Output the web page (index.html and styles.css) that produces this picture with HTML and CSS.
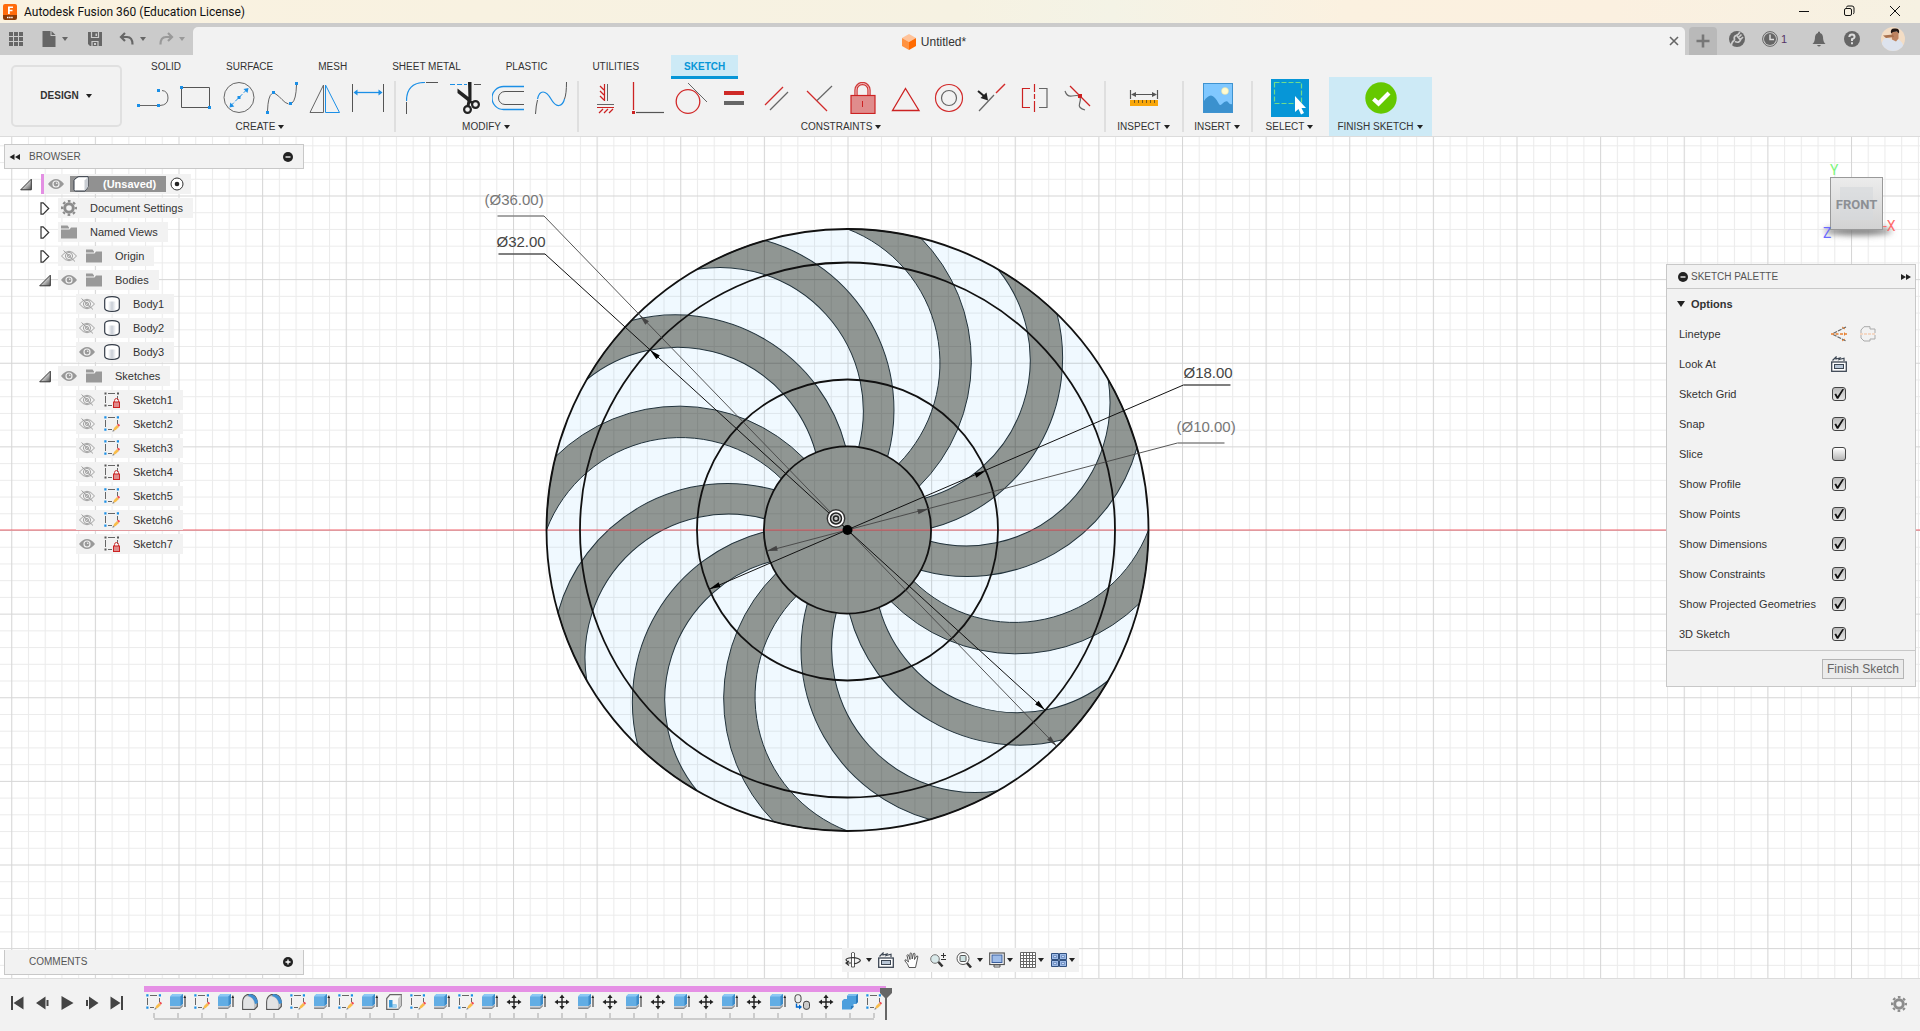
FILE: index.html
```html
<!DOCTYPE html>
<html lang="en">
<head>
<meta charset="utf-8">
<title>Autodesk Fusion 360 (Education License)</title>
<link rel="stylesheet" href="styles.css">
</head>
<body>
<svg class="defs" aria-hidden="true">
  <defs>
    <linearGradient id="gTri" x1="0" y1="0" x2="1" y2="1"><stop offset="0.3" stop-color="#fff"/><stop offset="1" stop-color="#555"/></linearGradient>
    <linearGradient id="gCyl"><stop offset="0" stop-color="#fff"/><stop offset="0.5" stop-color="#c9ced6"/><stop offset="1" stop-color="#fff"/></linearGradient>
  </defs>
  <symbol id="eye" viewBox="0 0 16 16"><path d="M0 8Q8-2 16 8Q8 18 0 8Z" fill="#999"/><circle cx="8" cy="8" r="3.6" fill="#f2f2f2"/><circle cx="8" cy="8" r="2.4" fill="#999"/><circle cx="8.7" cy="7.3" r=".8" fill="#f2f2f2"/></symbol>
  <symbol id="eyeoff" viewBox="0 0 16 16"><g fill="none" stroke="#999" stroke-width=".9"><path d="M.5 8Q8-1.500 15.500 8Q8 17.500.5 8Z"/><circle cx="8" cy="8" r="3.600"/><circle cx="8" cy="8" r="1.500"/><path d="M2.500 2.500L14 13.500"/></g></symbol>
  <symbol id="folder" viewBox="0 0 16 16"><path d="M0 1.500H6.500L8 3.500V4.500H0Z" fill="#999"/><path d="M0 5.500H8.500L10 3.500H16V14.500H0Z" fill="#999"/></symbol>
  <symbol id="gear" viewBox="0 0 16 16"><circle cx="8" cy="8" r="4.300" fill="none" stroke="#8c8c8c" stroke-width="3"/><circle cx="8" cy="8" r="6.900" fill="none" stroke="#8c8c8c" stroke-width="2.200" stroke-dasharray="2.700 2.720" stroke-dashoffset="1.350"/></symbol>
  <symbol id="body" viewBox="0 0 16 16"><path d="M.7 4Q.7.700 8 .7T15.300 4V12Q15.300 15.300 8 15.300T.7 12Z" fill="#fff" stroke="#333b47" stroke-width="1.200"/><path d="M4 5.500H12V14Q8 15 4 14Z" fill="url(#gCyl)"/></symbol>
  <symbol id="sk-frame" viewBox="0 0 16 16"><path d="M4 1.500H11M1.500 4V11M13.500 4V8M4 13.500H8" fill="none" stroke="#666"/></symbol>
  <symbol id="sk-lock" viewBox="0 0 16 16"><use href="#sk-frame"/><path d="M.5.500h2v2h-2zM13 .5h2v2h-2zM.5 12.500h2v2h-2z" fill="#555"/><path d="M10.500 10V8.500a2 2 0 0 1 4 0V10" fill="none" stroke="#cf3a3a"/><rect x="9.500" y="10" width="6" height="5.500" fill="#e08a8a" stroke="#c22"/></symbol>
  <symbol id="sk-edit" viewBox="0 0 16 16"><use href="#sk-frame"/><path d="M.3.300h2.200v2.200H.300zM12.800.300H15v2.200h-2.200zM.3 12.500h2.200v2.200H.300z" fill="#1b8fe6"/><path d="M9 15l1-3 3-3 2 2-3.300 3z" fill="#f9bd4b"/><path d="M13 8.800l1-1q1.500.2 2 1.700l-1.200 1.300z" fill="#ee4d55"/><path d="M8.300 15.700l.8-2.200 1.600 1.600z" fill="#888"/></symbol>
  <symbol id="tri-closed" viewBox="0 0 12 14"><path d="M1.700 1V13H4L10 7 4 1Z" fill="#fff" stroke="#333" stroke-width="1.300"/></symbol>
  <symbol id="tri-open" viewBox="0 0 12 12"><path d="M11.300.7V11.300H.7Z" fill="url(#gTri)" stroke="#333"/></symbol>
  <symbol id="caret" viewBox="0 0 8 8"><path d="M1 2H7L4 6Z"/></symbol>
  <symbol id="lookat" viewBox="0 0 16 16"><rect x=".7" y="6" width="14.600" height="9.300" fill="#fff" stroke="#3c4653" stroke-width="1.300"/><rect x="3.500" y="8.500" width="9" height="4" fill="#b9c6d6" stroke="#3c4653"/><path d="M1.500 4.500L5 1V3L9 2 8 3.500 13 2.200V5" fill="none" stroke="#3c4653" stroke-width="1.200"/></symbol>
  <symbol id="extrude" viewBox="0 0 16 16"><path d="M0 12.500H10L13 10V12L10 15H0Z" fill="#aab0b8"/><path d="M.3 14.500H10L12.500 12" stroke="#888" fill="none"/><path d="M0 2.500L2.500 0H13V9.500L10.500 12H0Z" fill="#62ade4"/><path d="M0 2.500L2.500 0H13L10.500 2.500Z" fill="#8cc8f5"/><path d="M10.500 2.500L13 0V9.500L10.500 12Z" fill="#3d8cc9"/><path d="M15 13V3" stroke="#222"/><path d="M13.400 4L15 1l1 3z" fill="#222"/></symbol>
  <symbol id="fillet-t" viewBox="0 0 16 16"><path d="M.7 15.300V8Q.7 2.500 5 .7H10Q15.300 2 15.300 10V12.500L12.500 15.300Z" fill="#c4c6c8" stroke="#555" stroke-width="1.200"/><path d="M1.300 14.700V8Q1.500 3 5 2.500Q11.500 3 12 9.500V14.700Z" fill="#e2e3e4"/><path d="M7 0Q11 0 13.500 3T16 9L13 10Q12 3.500 6 2Z" fill="#3f8fd2"/></symbol>
  <symbol id="shell" viewBox="0 0 16 16"><path d="M.7 4.500L4 .7H15.300V11.500L12 15.300H.7Z" fill="#f6f6f6" stroke="#666" stroke-width="1.200"/><path d="M12 4.500L15.300.7V11.500L12 15.300Z" fill="#c8c8c8"/><path d="M3 6V13.500H10.500V10.500H6.500V6Z" fill="#3d9bd9"/><path d="M6.500 10.500h4v3h-4z" fill="#9fd2f3"/></symbol>
  <symbol id="move" viewBox="0 0 16 16"><path d="M8 2V14M2 8H14" stroke="#222" stroke-width="1.400"/><path d="M8 .5l2.600 3.500H5.400zM8 15.500l2.600-3.500H5.400zM.5 8L4 5.400v5.200zM15.500 8L12 5.400v5.200z" fill="#222"/></symbol>
  <symbol id="pattern" viewBox="0 0 16 16"><rect x="1" y=".7" width="6" height="8" rx="2.500" fill="#eee" stroke="#444"/><rect x="9.500" y="7.300" width="6" height="8" rx="2.500" fill="#ccc" stroke="#444"/><path d="M2.500 9.500V13H6" fill="none" stroke="#06c" stroke-width="1.400"/><path d="M5 10.500L8 13 5 15.500z" fill="#06c"/></symbol>
  <symbol id="combine" viewBox="0 0 16 16"><path d="M0 7L2 5H5V2L7 0H16V8L14 10H11.500V13L9 15.500H0Z" fill="#4c9fdd"/><path d="M5 2L7 0H16L14 2Z" fill="#7dbdf0"/><path d="M14 2L16 0V8L14 10ZM9 12h2.500v1L9 15.500z" fill="#2c7abb"/></symbol>
</svg>

<header class="titlebar">
  <svg class="logo" viewBox="0 0 14 16"><rect width="14" height="13" rx="2" fill="#ff6b0b"/><path d="M0 11H14V14Q14 16 12 16H2Q0 16 0 14Z" fill="#8a3a06"/><path d="M5 10V2.500H10V4H6.800V5.700H9.500V7.200H6.800V10Z" fill="#fff"/><path d="M4 13.500h6" stroke="#fff" stroke-width="1.500" stroke-dasharray="1.500 .6"/></svg>
  <span class="apptitle">Autodesk Fusion 360 (Education License)</span>
  <div class="wincontrols">
    <button aria-label="Minimize"><svg viewBox="0 0 12 12"><path d="M1 6.500H11" stroke="#111"/></svg></button>
    <button aria-label="Restore"><svg viewBox="0 0 12 12"><path d="M3.500 2.500V2Q4 1 5 1H9Q11 1 11 3V7.500Q11 8.500 10 9" fill="none" stroke="#111"/><rect x="1.500" y="3.500" width="7" height="7" rx="1.500" fill="none" stroke="#111"/></svg></button>
    <button aria-label="Close"><svg viewBox="0 0 12 12"><path d="M1 1L11 11M11 1L1 11" stroke="#111"/></svg></button>
  </div>
</header>

<div class="tabbar">
  <div class="quick">
    <button aria-label="Data panel"><svg viewBox="0 0 16 16" width="16" height="16" fill="#666"><path d="M1 1h4v4H1zM6 1h4v4H6zM11 1h4v4h-4zM1 6h4v4H1zM6 6h4v4H6zM11 6h4v4h-4zM1 11h4v4H1zM6 11h4v4H6zM11 11h4v4h-4z"/></svg></button>
    <button class="drop file" aria-label="File"><svg viewBox="0 0 16 16" width="16" height="16"><path d="M1.500 0H9.500V5H14.500V16H1.500ZM10.500 0L14.500 4H10.500Z" fill="#666"/></svg><svg class="car" fill="#666"><use href="#caret"/></svg></button>
    <button class="save" aria-label="Save"><svg viewBox="0 0 16 16" width="16" height="16"><path d="M1 1H15V15H3L1 13Z" fill="#666"/><path d="M4.500 1V6.500H11.500V1M5 15V10.500H11V15" fill="none" stroke="#ccc" stroke-width="1.200"/><path d="M7 12h2v2H7zM8.500 2.500h1.500v2.500H8.500z" fill="#ccc"/></svg></button>
    <button class="drop" aria-label="Undo"><svg viewBox="0 0 16 16" width="16" height="16"><path d="M6 2L2 6L6 10M2 6H8Q13.500 6 13.500 13.500" fill="none" stroke="#666" stroke-width="2.200"/></svg><svg class="car"><use href="#caret"/></svg></button>
    <button class="drop redo" aria-label="Redo"><svg viewBox="0 0 16 16" width="16" height="16"><path d="M10 2L14 6L10 10M14 6H8Q2.500 6 2.500 13.500" fill="none" stroke="#999" stroke-width="2.200"/></svg><svg class="car"><use href="#caret"/></svg></button>
  </div>
  <div class="doctab">
    <div class="docname"><svg viewBox="0 0 14 16" width="14" height="16"><path d="M7 0L14 4 7 8 0 4Z" fill="#ffc39a"/><path d="M0 4L7 8V16L0 12Z" fill="#ff9240"/><path d="M14 4L7 8V16L14 12Z" fill="#ff6a00"/></svg><span>Untitled*</span></div>
    <button aria-label="Close tab"><svg viewBox="0 0 10 10" width="10" height="10"><path d="M1 1L9 9M9 1L1 9" stroke="#666" stroke-width="1.600"/></svg></button>
  </div>
  <button class="newtab" aria-label="New tab"><svg viewBox="0 0 14 14" width="14" height="14"><path d="M7 .5V13.500M.5 7H13.500" stroke="#777" stroke-width="2.600"/></svg></button>
  <div class="status">
    <button aria-label="Extensions"><svg viewBox="0 0 16 16" width="16" height="16"><circle cx="8" cy="8" r="8" fill="#666"/><path d="M2 15Q3 10.500 5 9.500L5.500 8.500Q4.500 5.500 7 4.500L9 3.500L11 1M9.500 6.500L12.500 3.500M11.500 8.500L14 6M6 10.500Q10 12.500 11.500 9L8 5" fill="none" stroke="#ccc" stroke-width="1.700"/></svg></button>
    <button class="jobs" aria-label="Job status"><svg viewBox="0 0 16 16" width="16" height="16"><circle cx="8" cy="8" r="7.400" fill="none" stroke="#666"/><circle cx="8" cy="8" r="6" fill="#666"/><path d="M8 3.500V8.500H12" fill="none" stroke="#ddd" stroke-width="1.500"/></svg><span>1</span></button>
    <button class="bell" aria-label="Notifications"><svg viewBox="0 0 16 16" width="16" height="16"><path d="M1.500 13Q4 11 4 6Q4.500 2.500 7 2V1Q8 0 9 1V2Q11.500 2.500 12 6Q12 11 14.500 13ZM6 14H10Q8 17 6 14Z" fill="#666"/></svg></button>
    <button aria-label="Help"><svg viewBox="0 0 16 16" width="16" height="16"><circle cx="8" cy="8" r="8" fill="#666"/><path d="M5.300 6Q5.500 3.500 8 3.500T10.600 6Q10.500 7.300 8 8.300V10M8 11.300V13.300" fill="none" stroke="#ddd" stroke-width="2"/></svg></button>
    <button class="avatar" aria-label="Account"><svg viewBox="0 0 24 24" width="24" height="24"><clipPath id="av"><circle cx="12" cy="12" r="12"/></clipPath><g clip-path="url(#av)"><rect width="24" height="24" fill="#f3ddc5"/><path d="M1 24Q-1 12 6 10.500L11 13 16 12Q23 14 23 24Z" fill="#dde3ee"/><path d="M10.500 5h7v6.500l-2.500 3-4-2z" fill="#bd8360"/><path d="M2 8.500L12 7.500 13 10 5 11z" fill="#a9714d"/><path d="M10 6.500Q9 1 14 1.500Q19 1 18 6.500L16 4.500 12 5Z" fill="#231815"/></g></svg></button>
  </div>
</div>

<div class="ribbon">
  <button class="design">DESIGN <svg class="car"><use href="#caret"/></svg></button>
  <div class="rmain">
    <nav class="rtabs">
      <a href="#solid">SOLID</a><a href="#surface">SURFACE</a><a href="#mesh">MESH</a><a href="#sheet">SHEET METAL</a><a href="#plastic">PLASTIC</a><a href="#utilities">UTILITIES</a><a href="#sketch" class="active">SKETCH</a>
    </nav>
    <div class="groups">
      <section class="group">
        <div class="icons">
          <svg viewBox="0 0 32 32"><path d="M3 23.500H20M25 8.500Q31 9 31 16T23 23.500" fill="none" stroke="#666"/><path d="M0 22h3v3H0zM20 22h3v3h-3zM20 7h3v3h-3z" fill="#1b8fe6"/></svg>
          <svg viewBox="0 0 32 32"><path d="M3 5.500H29.500V24M28 25.500H1.500V7" fill="none" stroke="#555"/><path d="M0 4h3v3H0zM28 24h3v3h-3z" fill="#1b8fe6"/></svg>
          <svg viewBox="0 0 32 32"><circle cx="16" cy="15.500" r="15" fill="none" stroke="#666"/><path d="M8 23.500L24 7.500" stroke="#1b8fe6" stroke-dasharray="4 2"/><path d="M14.500 14h3v3h-3zM6.500 25.500l.8-5 4 4zM25.500 6l-5 1 4 4z" fill="#1b8fe6"/></svg>
          <svg viewBox="0 0 32 32"><path d="M1.500 29Q2 14 6 11.500M9 11.500Q13 14 16 17.500T22.500 22M26 21Q30 18 30.500 3" fill="none" stroke="#666"/><path d="M0 29h3v3H0zM6 9h3v3H6zM23 20h3v3h-3zM29 0h3v3h-3z" fill="#1b8fe6"/></svg>
          <svg viewBox="0 0 32 32"><path d="M14.500 3V30.500H1Z" fill="none" stroke="#666"/><path d="M16.500 3V30.500H30.500Z" fill="none" stroke="#1b8fe6"/></svg>
          <svg viewBox="0 0 32 32"><path d="M.5 2V30M31.500 2V30" stroke="#555"/><path d="M3 10.500H29" stroke="#1b8fe6" stroke-width="1.300"/><path d="M1.500 10.500L5.500 7.500v6zM30.500 10.500L26.500 7.500v6z" fill="#1b8fe6"/></svg>
        </div>
        <button class="glabel">CREATE <svg class="car"><use href="#caret"/></svg></button>
      </section>
      <section class="group">
        <div class="icons">
          <svg viewBox="0 0 32 32"><path d="M.5 19Q.5.500 19 .5" fill="none" stroke="#1b8fe6" stroke-width="1.200"/><path d="M.5 20V32M20 .5H32" stroke="#555"/></svg>
          <svg viewBox="0 0 32 32"><path d="M1 2.500H18" stroke="#1b8fe6" stroke-width="1.200" stroke-dasharray="5 2"/><path d="M25 2.500H32" stroke="#555"/><path d="M19 0H22.500V18L19.500 20ZM8.500 6.500L22 17 20.500 20.500 8.500 11Z" fill="#222"/><circle cx="18.500" cy="27.500" r="3.400" fill="none" stroke="#222" stroke-width="2.200"/><circle cx="26.500" cy="22.500" r="3.400" fill="none" stroke="#222" stroke-width="2.200"/><path d="M19 24L20 19l4 2" stroke="#222" stroke-width="3" fill="none"/></svg>
          <svg viewBox="0 0 32 32" fill="none"><path d="M32 4.500H11.500A11.500 11.500 0 0 0 11.500 27.500H32" stroke="#1b8fe6" stroke-width="1.300"/><path d="M32 9.500H13A6.500 6.500 0 0 0 13 22.500H32" stroke="#555"/></svg>
          <svg viewBox="0 0 32 32" fill="none"><path d="M.5 32Q1 23 2.500 18M29.500 17Q31.500 12 31.500 0" stroke="#555"/><path d="M2.500 17Q4 10 8 10T16 17 24 23.500 29.500 17" stroke="#1b8fe6" stroke-width="1.200"/></svg>
        </div>
        <button class="glabel">MODIFY <svg class="car"><use href="#caret"/></svg></button>
      </section>
      <section class="group">
        <div class="icons">
          <svg viewBox="0 0 32 32" fill="none"><path d="M18.500 2V19M8 22.500H25" stroke="#666"/><path d="M15.500 2V19M11 4l4 4M11 9l4 4M11 14l4 4M8 25.500H25M10 31l4-4M15 31l4-4M20 31l4-4" stroke="#c22" stroke-width="1.200"/></svg>
          <svg viewBox="0 0 32 32"><path d="M1.500 0V28" stroke="#c22" stroke-width="1.300"/><path d="M0 29h3v3H0z" fill="#c22"/><path d="M4 30.500H32" stroke="#555" stroke-width="1.200"/></svg>
          <svg viewBox="0 0 32 32" fill="none"><circle cx="13" cy="19.500" r="11.800" stroke="#d22a2a" stroke-width="1.300"/><path d="M13 1L32 20" stroke="#666"/></svg>
          <svg viewBox="0 0 32 32"><path d="M6 9h20v4H6z" fill="#cf2a27"/><path d="M6 19h20v4H6z" fill="#666"/></svg>
          <svg viewBox="0 0 32 32"><path d="M4 23L22 5" stroke="#d22a2a" stroke-width="1.200"/><path d="M9 28L27 10" stroke="#666" stroke-width="1.200"/></svg>
          <svg viewBox="0 0 32 32"><path d="M3 9L23 29" stroke="#d22a2a" stroke-width="1.200"/><path d="M13 18.500L28 4" stroke="#666" stroke-width="1.200"/></svg>
          <svg viewBox="0 0 32 32"><path d="M9 14V8a6.500 6.500 0 0 1 13 0V14" fill="none" stroke="#cf3a3a" stroke-width="3.400"/><path d="M9 14V8a6.500 6.500 0 0 1 13 0V14" fill="none" stroke="#f3c6c6"/><rect x="4" y="13.500" width="24" height="18" fill="#e08c8c" stroke="#c22" stroke-width="1.200"/><path d="M15.500 19v6" stroke="#c22"/></svg>
          <svg viewBox="0 0 32 32"><path d="M15.500 6.500L29 28.500H2.500Z" fill="none" stroke="#c22" stroke-width="1.300"/></svg>
          <svg viewBox="0 0 32 32" fill="none"><circle cx="16" cy="16" r="13.500" stroke="#d22a2a" stroke-width="1.200"/><circle cx="16" cy="16" r="7.500" stroke="#666" stroke-width="1.200"/></svg>
          <svg viewBox="0 0 32 32"><path d="M3 29L18 13" stroke="#666" stroke-width="1.200"/><path d="M20 11L29 2" stroke="#d22a2a" stroke-width="1.400"/><path d="M2 9L8 14" stroke="#222" stroke-width="2"/><path d="M12 18.500L4.500 16 10.500 10.500z" fill="#222"/></svg>
          <svg viewBox="0 0 32 32" fill="none"><path d="M11 6.500H3.500V25.500H11M15.500 2V10M15.500 12V17M15.500 19V30" stroke="#c22" stroke-width="1.200"/><path d="M20 6.500H28V25.500H20" stroke="#666" stroke-width="1.200"/></svg>
          <svg viewBox="0 0 32 32"><path d="M3 9Q5 15 10 14T18 14M18 14Q19 18 17.500 22T23 28" fill="none" stroke="#666" stroke-width="1.200"/><path d="M8 4L28 24" stroke="#c22" stroke-width="1.300"/><path d="M16 12h4v4h-4z" fill="#c22"/></svg>
        </div>
        <button class="glabel">CONSTRAINTS <svg class="car"><use href="#caret"/></svg></button>
      </section>
      <section class="group small">
        <div class="icons"><svg viewBox="0 0 32 32"><path d="M2.500 8V17M29.500 8V17M4 12.500H28" stroke="#555" stroke-width="1.200"/><path d="M3 12.500l5-2.500v5zM29 12.500l-5-2.500v5z" fill="#555"/><path d="M2 18h28v6H2z" fill="#f9a70a"/><path d="M6.500 18v3M10.500 18v3M14.500 18v3M18.500 18v3M22.500 18v3M26.500 18v3" stroke="#7a5a1a"/></svg></div>
        <button class="glabel">INSPECT <svg class="car"><use href="#caret"/></svg></button>
      </section>
      <section class="group small insert">
        <div class="icons"><svg viewBox="0 0 32 32"><rect x="1.500" y="1.500" width="29" height="29" fill="#80c8ff" stroke="#3f93d0"/><circle cx="23" cy="9" r="3.500" fill="#fffbd0" stroke="#e4dca0" stroke-width=".5"/><path d="M2 19Q5 14 9 13.500Q13 14 17 22Q18 24 20 22 23 18.500 25.500 19.500 28 23 30 22V30H2Z" fill="#3b91ce"/></svg></div>
        <button class="glabel">INSERT <svg class="car"><use href="#caret"/></svg></button>
      </section>
      <section class="group small last">
        <div class="icons"><svg class="big" viewBox="0 0 38 38"><rect width="38" height="38" fill="#0696d7"/><rect x="3.500" y="3.500" width="27" height="21" fill="none" stroke="#6fdc8c" stroke-width="1.200" stroke-dasharray="5 2"/><path d="M24 17V33L27.500 30 30 35.500 33 34 30.500 29H35Z" fill="#fff"/></svg></div>
        <button class="glabel">SELECT <svg class="car"><use href="#caret"/></svg></button>
      </section>
      <section class="group small finish">
        <div class="icons"><svg viewBox="0 0 32 32"><circle cx="16" cy="16" r="15.700" fill="#65c800"/><path d="M8.500 17L13.500 21.500 24 11" fill="none" stroke="#fff" stroke-width="4.200"/></svg></div>
        <button class="glabel">FINISH SKETCH <svg class="car"><use href="#caret"/></svg></button>
      </section>
    </div>
  </div>
</div>

<main class="workspace">
  <svg class="viewport" role="img" aria-label="Impeller sketch">
    <defs>
      <pattern id="minor" patternUnits="userSpaceOnUse" width="16.725" height="16.725"><path d="M0 0V16.725M0 0H16.725" stroke="#000" stroke-opacity=".08" stroke-width="2"/></pattern>
      <pattern id="major" patternUnits="userSpaceOnUse" width="83.625" height="83.625"><path d="M0 0V83.625M0 0H83.625" stroke="#000" stroke-opacity=".09" stroke-width="2"/></pattern>
      <path id="blade" d="M-301 0A143.500 143.500 0 0 1-66-51L-43.500-71.500A175.800 175.800 0 0 0-291.900-73.400A301 301 0 0 0-301 0Z"/>
      <path id="tip" d="M0 0L-11-2.500V2.500Z"/>
    </defs>
    <svg x="44.140%" y="46.730%" class="origin">
      <circle r="301" fill="#f0f9ff"/>
      <g fill="#909693" stroke="#22333c" stroke-width="1">
        <use href="#blade"/><use href="#blade" transform="rotate(30)"/><use href="#blade" transform="rotate(60)"/><use href="#blade" transform="rotate(90)"/><use href="#blade" transform="rotate(120)"/><use href="#blade" transform="rotate(150)"/><use href="#blade" transform="rotate(180)"/><use href="#blade" transform="rotate(210)"/><use href="#blade" transform="rotate(240)"/><use href="#blade" transform="rotate(270)"/><use href="#blade" transform="rotate(300)"/><use href="#blade" transform="rotate(330)"/>
      </g>
      <circle r="83.600" fill="#8e9491"/>
      <rect x="-4014" y="-4014" width="8028" height="8028" fill="url(#minor)"/>
      <rect x="-4014" y="-4014" width="8028" height="8028" fill="url(#major)"/>
      <path d="M-4000 0H4000" stroke="#f0505a" stroke-opacity=".45" stroke-width="1.800"/>
      <g fill="none" stroke="#111" stroke-width="1.800"><circle r="301"/><circle r="267.500"/><circle r="150.500"/><circle r="83.600"/></g>
      <g fill="none" stroke="#444" stroke-width=".9"><path d="M-303.500-314L209 216M-80 21L330-87"/><path d="M-350-314H-303.500M330-87H377" stroke="#888" stroke-width="1.500"/></g>
      <g fill="none" stroke="#111" stroke-width="1"><path d="M-302.500-276L197.500 180M-137.500 59L336-145"/><path d="M-349-276H-302.500M336-145H383" stroke="#555" stroke-width="1.500"/></g>
      <g fill="#444"><use href="#tip" transform="translate(209 216) rotate(46)"/><use href="#tip" transform="translate(-208 -215) rotate(226)"/><use href="#tip" transform="translate(81 -21) rotate(-14.700)"/><use href="#tip" transform="translate(-81 21) rotate(165.300)"/></g>
      <g fill="#000"><use href="#tip" transform="translate(197.500 180) rotate(42.400)"/><use href="#tip" transform="translate(-197.500 -180) rotate(222.400)"/><use href="#tip" transform="translate(138 -59) rotate(-23.300)"/><use href="#tip" transform="translate(-138 59) rotate(156.700)"/></g>
      <circle r="5" fill="#000"/>
      <g transform="translate(-11.500 -11.500)" fill="none"><circle r="7.500" fill="#c8cac9" stroke="#fff" stroke-width="3"/><circle r="8.700" stroke="#333" stroke-width="1.400"/><circle r="5.500" stroke="#222" stroke-width="1.500"/><circle r="2.500" stroke="#222" stroke-width="1.500"/></g>
      <g class="dims"><text x="-363" y="-325" class="ref">(Ø36.00)</text><text x="-351" y="-283">Ø32.00</text><text x="336" y="-152">Ø18.00</text><text x="329" y="-98" class="ref">(Ø10.00)</text></g>
    </svg>
  </svg>

  <aside class="left">
    <div class="panelbar"><svg viewBox="0 0 12 8" width="12" height="8"><path d="M5.500 1V7L.5 4ZM11 1V7L6 4Z" fill="#222"/></svg><span>BROWSER</span><button aria-label="Collapse"><svg viewBox="0 0 10 10" width="10" height="10"><circle cx="5" cy="5" r="5" fill="#222"/><path d="M2.500 5h5" stroke="#fff" stroke-width="1.300"/></svg></button></div>
    <ul class="tree">
      <li class="l0"><svg class="tw"><use href="#tri-open"/></svg><div class="node root"><svg class="ic"><use href="#eye"/></svg><span class="sel"><svg viewBox="0 0 16 16" class="ic"><path d="M1 4.500Q1 3.500 4 1.500 5 .7 6 .7H15V10Q15 11.500 12 15H2.500Q1 15 1 13.500Z" fill="#fff" stroke="#333b47"/><path d="M11.500 4.500L15 1V11L11.500 15Z" fill="#c9cdd3"/></svg><b>(Unsaved)</b></span><svg class="ic" viewBox="0 0 16 16"><circle cx="8" cy="8" r="6" fill="#fff" stroke="#333"/><circle cx="8" cy="8" r="2.300" fill="#222"/></svg></div></li>
      <li class="l1"><svg class="tw"><use href="#tri-closed"/></svg><div class="node"><svg class="ic"><use href="#gear"/></svg><span>Document Settings</span></div></li>
      <li class="l1"><svg class="tw"><use href="#tri-closed"/></svg><div class="node"><svg class="ic"><use href="#folder"/></svg><span>Named Views</span></div></li>
      <li class="l1"><svg class="tw"><use href="#tri-closed"/></svg><div class="node"><svg class="ic"><use href="#eyeoff"/></svg><svg class="ic"><use href="#folder"/></svg><span>Origin</span></div></li>
      <li class="l1"><svg class="tw"><use href="#tri-open"/></svg><div class="node"><svg class="ic"><use href="#eye"/></svg><svg class="ic"><use href="#folder"/></svg><span>Bodies</span></div></li>
      <li class="l2"><div class="node"><svg class="ic"><use href="#eyeoff"/></svg><svg class="ic"><use href="#body"/></svg><span>Body1</span></div></li>
      <li class="l2"><div class="node"><svg class="ic"><use href="#eyeoff"/></svg><svg class="ic"><use href="#body"/></svg><span>Body2</span></div></li>
      <li class="l2"><div class="node"><svg class="ic"><use href="#eye"/></svg><svg class="ic"><use href="#body"/></svg><span>Body3</span></div></li>
      <li class="l1"><svg class="tw"><use href="#tri-open"/></svg><div class="node"><svg class="ic"><use href="#eye"/></svg><svg class="ic"><use href="#folder"/></svg><span>Sketches</span></div></li>
      <li class="l2"><div class="node"><svg class="ic"><use href="#eyeoff"/></svg><svg class="ic"><use href="#sk-lock"/></svg><span>Sketch1</span></div></li>
      <li class="l2"><div class="node"><svg class="ic"><use href="#eyeoff"/></svg><svg class="ic"><use href="#sk-edit"/></svg><span>Sketch2</span></div></li>
      <li class="l2"><div class="node"><svg class="ic"><use href="#eyeoff"/></svg><svg class="ic"><use href="#sk-edit"/></svg><span>Sketch3</span></div></li>
      <li class="l2"><div class="node"><svg class="ic"><use href="#eyeoff"/></svg><svg class="ic"><use href="#sk-lock"/></svg><span>Sketch4</span></div></li>
      <li class="l2"><div class="node"><svg class="ic"><use href="#eyeoff"/></svg><svg class="ic"><use href="#sk-edit"/></svg><span>Sketch5</span></div></li>
      <li class="l2"><div class="node"><svg class="ic"><use href="#eyeoff"/></svg><svg class="ic"><use href="#sk-edit"/></svg><span>Sketch6</span></div></li>
      <li class="l2"><div class="node"><svg class="ic"><use href="#eye"/></svg><svg class="ic"><use href="#sk-lock"/></svg><span>Sketch7</span></div></li>
    </ul>
    <div class="panelbar comments"><span>COMMENTS</span><button aria-label="Expand"><svg viewBox="0 0 10 10" width="10" height="10"><circle cx="5" cy="5" r="5" fill="#222"/><path d="M2.500 5h5M5 2.500v5" stroke="#fff" stroke-width="1.300"/></svg></button></div>
  </aside>

  <div class="navbar">
    <button class="drop" aria-label="Orbit"><svg viewBox="0 0 16 16" class="ic"><path d="M6.500 1L8 0 9.500 1V15H6.500Z" fill="#fff" stroke="#333" stroke-width=".8"/><path d="M2.500 9.500Q-1 7 4 6T13 6.500 14 10 9 11.500M1 11H6M4 9L1 11l3 2.500" fill="none" stroke="#333" stroke-width="1.200"/></svg><svg class="car"><use href="#caret"/></svg></button>
    <button aria-label="Look at"><svg class="ic"><use href="#lookat"/></svg></button>
    <button aria-label="Pan"><svg viewBox="0 0 16 16" class="ic"><path d="M5 15.500Q4 12 1 9 .5 7.500 2 7.800L4.500 10 3 3.500Q3.500 2 4.500 3L6 7.500 6 1.500Q7 .2 7.700 1.500L8.200 7 9.500 1.500Q10.700.7 11 2L10.500 7.500 12.700 4Q14 3.500 13.800 5L12.500 11 11.500 15.500Z" fill="#fff" stroke="#444" stroke-width=".9"/></svg></button>
    <button aria-label="Zoom"><svg viewBox="0 0 16 16" class="ic"><circle cx="5" cy="7" r="4.300" fill="#d9e9ea" stroke="#777"/><path d="M8.500 10L12.500 14.500" stroke="#333" stroke-width="2.600"/><path d="M11 3.500H16M13.500 1V6M11 7.500H16" stroke="#333"/></svg></button>
    <button class="drop" aria-label="Fit"><svg viewBox="0 0 16 16" class="ic"><circle cx="7" cy="6.500" r="6" fill="#fff" stroke="#555"/><rect x="4" y="3.500" width="6" height="6" rx="1" fill="#cfe3e3" stroke="#555"/><path d="M11 11L15 15.500" stroke="#333" stroke-width="2.600"/></svg><svg class="car"><use href="#caret"/></svg></button>
    <button class="drop tight" aria-label="Display settings"><svg viewBox="0 0 16 16" class="ic"><rect x=".7" y="1" width="14.600" height="11.500" fill="#fff" stroke="#555" stroke-width="1.200"/><rect x="3" y="3" width="10" height="7.500" fill="#9dbbe8" stroke="#3a5e9c"/><path d="M5 15h6v-2H5z" fill="#fff" stroke="#555"/></svg><svg class="car"><use href="#caret"/></svg></button>
    <button class="drop tight" aria-label="Grid settings"><svg viewBox="0 0 16 16" class="ic"><path d="M.5.500H15.500V15.500H.500ZM3.500.500V15M6.500.500V15M9.500.500V15M12.500.500V15M.500 3.500H15M.500 6.500H15M.500 9.500H15M.500 12.500H15" fill="#fff" stroke="#666"/></svg><svg class="car"><use href="#caret"/></svg></button>
    <button class="drop tight" aria-label="Viewports"><svg viewBox="0 0 16 16" class="ic"><path d="M.5 1.500h7v6h-7zM8.500 1.500h7v6h-7zM.5 8.500h7v6h-7zM8.500 8.500h7v6h-7z" fill="#9dbbe8" stroke="#31507f"/><path d="M2.500 3.500h3v2h-3zM10.500 3.500h3v2h-3zM2.500 10.500h3v2h-3zM10.500 10.500h3v2h-3z" fill="#c9dbf4" stroke="#5a7db5" stroke-width=".7"/></svg><svg class="car"><use href="#caret"/></svg></button>
  </div>

  <aside class="right">
    <svg class="viewcube" viewBox="0 0 90 90" width="90" height="90">
      <defs><linearGradient id="cube" x1="0" y1="0" x2="0" y2="1"><stop offset="0" stop-color="#ececec"/><stop offset="1" stop-color="#d2d2d2"/></linearGradient><filter id="sh" x="-20%" y="-100%" width="140%" height="300%"><feGaussianBlur stdDeviation="3"/></filter></defs>
      <ellipse cx="48" cy="76" rx="34" ry="4" fill="#777" filter="url(#sh)"/>
      <rect x="20.500" y="22.500" width="52" height="52" fill="url(#cube)" stroke="#999"/>
      <rect x="30" y="32" width="33" height="33" fill="#d5d8dc" fill-opacity=".6"/>
      <text x="46.500" y="54" text-anchor="middle" class="front">FRONT</text>
      <text x="20" y="20" class="axis" fill="#7df57d">Y</text><text x="13" y="83" class="axis" fill="#6a6aff">Z</text><text x="73" y="76" class="axis" fill="#ff6b6b">-X</text>
    </svg>
    <form class="palette">
      <div class="phead"><svg viewBox="0 0 10 10" width="10" height="10"><circle cx="5" cy="5" r="5" fill="#222"/><path d="M2.500 5h5" stroke="#fff" stroke-width="1.300"/></svg><span>SKETCH PALETTE</span><svg viewBox="0 0 12 8" width="12" height="8"><path d="M1 1V7L6 4ZM6 1V7L11 4Z" fill="#222"/></svg></div>
      <div class="pbody">
        <h2><svg viewBox="0 0 10 8" width="10" height="8"><path d="M1 1H9L5 7Z" fill="#222"/></svg>Options</h2>
        <div class="prow"><span>Linetype</span><span class="lt"><svg viewBox="0 0 16 16" class="ic"><path d="M15 1L2 7.500M2 8.500L15 15" stroke="#666" stroke-width="1.200" stroke-dasharray="4 1" fill="none"/><path d="M0 8H16" stroke="#e88030" stroke-width="1.300" stroke-dasharray="3 1.500"/><path d="M13.500 6.500v3M11 1l3 2M11 15l3-2" stroke="#e88030"/></svg><svg viewBox="0 0 16 16" class="ic"><path d="M1 7V4L4 .7H10V3H15V7M1 9V12L4 15H10V13H15V9" fill="none" stroke="#aaa"/><path d="M0 8H16" stroke="#f3bd98" stroke-dasharray="3 1"/></svg></span></div>
        <div class="prow"><span>Look At</span><svg class="ic"><use href="#lookat"/></svg></div>
        <label class="prow"><span>Sketch Grid</span><input type="checkbox" checked></label>
        <label class="prow"><span>Snap</span><input type="checkbox" checked></label>
        <label class="prow"><span>Slice</span><input type="checkbox"></label>
        <label class="prow"><span>Show Profile</span><input type="checkbox" checked></label>
        <label class="prow"><span>Show Points</span><input type="checkbox" checked></label>
        <label class="prow"><span>Show Dimensions</span><input type="checkbox" checked></label>
        <label class="prow"><span>Show Constraints</span><input type="checkbox" checked></label>
        <label class="prow"><span>Show Projected Geometries</span><input type="checkbox" checked></label>
        <label class="prow"><span>3D Sketch</span><input type="checkbox" checked></label>
      </div>
      <div class="pfoot"><button type="button">Finish Sketch</button></div>
    </form>
  </aside>
</main>

<footer class="timeline">
  <div class="play">
    <button aria-label="Go to start"><svg viewBox="0 0 14 14"><path d="M1 0h2v14H1zM13.500 .5V13.500L3.500 7Z"/></svg></button>
    <button aria-label="Step back"><svg viewBox="0 0 14 14"><path d="M10.500.5V13.500L1 7ZM11.500 4h2v6h-2z"/></svg></button>
    <button aria-label="Play"><svg viewBox="0 0 14 14"><path d="M1.500 0V14L13.500 7Z"/></svg></button>
    <button aria-label="Step forward"><svg viewBox="0 0 14 14"><path d="M4 .5V13.500L13.500 7ZM1 4h2v6H1z"/></svg></button>
    <button aria-label="Go to end"><svg viewBox="0 0 14 14"><path d="M11 0h2v14h-2zM.5.500V13.500L10.500 7Z"/></svg></button>
  </div>
  <div class="trackwrap">
    <div class="bar"></div>
    <ol class="track">
      <li><svg class="ic"><use href="#sk-edit"/></svg></li><li><svg class="ic"><use href="#extrude"/></svg></li><li><svg class="ic"><use href="#sk-edit"/></svg></li><li><svg class="ic"><use href="#extrude"/></svg></li><li><svg class="ic"><use href="#fillet-t"/></svg></li><li><svg class="ic"><use href="#fillet-t"/></svg></li><li><svg class="ic"><use href="#sk-edit"/></svg></li><li><svg class="ic"><use href="#extrude"/></svg></li><li><svg class="ic"><use href="#sk-edit"/></svg></li><li><svg class="ic"><use href="#extrude"/></svg></li><li><svg class="ic"><use href="#shell"/></svg></li><li><svg class="ic"><use href="#sk-edit"/></svg></li><li><svg class="ic"><use href="#extrude"/></svg></li><li><svg class="ic"><use href="#sk-edit"/></svg></li><li><svg class="ic"><use href="#extrude"/></svg></li><li><svg class="ic"><use href="#move"/></svg></li><li><svg class="ic"><use href="#extrude"/></svg></li><li><svg class="ic"><use href="#move"/></svg></li><li><svg class="ic"><use href="#extrude"/></svg></li><li><svg class="ic"><use href="#move"/></svg></li><li><svg class="ic"><use href="#extrude"/></svg></li><li><svg class="ic"><use href="#move"/></svg></li><li><svg class="ic"><use href="#extrude"/></svg></li><li><svg class="ic"><use href="#move"/></svg></li><li><svg class="ic"><use href="#extrude"/></svg></li><li><svg class="ic"><use href="#move"/></svg></li><li><svg class="ic"><use href="#extrude"/></svg></li><li><svg class="ic"><use href="#pattern"/></svg></li><li><svg class="ic"><use href="#move"/></svg></li><li><svg class="ic"><use href="#combine"/></svg></li><li><svg class="ic"><use href="#sk-edit"/></svg></li>
    </ol>
    <svg class="marker" viewBox="0 0 12 32" width="12" height="32"><path d="M0 0H12V5L7 10V32H5V10L0 5Z" fill="#666"/></svg>
  </div>
  <button class="settings" aria-label="Timeline settings"><svg class="ic"><use href="#gear"/></svg></button>
</footer>
</body>
</html>
```

FILE: styles.css
```css
* { box-sizing: border-box; }
html, body { height: 100%; }
body {
  margin: 0;
  display: flex;
  flex-direction: column;
  overflow: hidden;
  background: #f2f2f2;
  color: #333;
  font: 11px/16px "Liberation Sans", Arial, sans-serif;
}
button {
  margin: 0; padding: 0; border: 0; background: none;
  color: inherit; font: inherit;
  display: flex; align-items: center; justify-content: center;
}
a { color: inherit; text-decoration: none; }
ul, ol { list-style: none; margin: 0; padding: 0; }
svg { display: block; flex: none; }
.defs { position: absolute; width: 0; height: 0; }
.ic { width: 16px; height: 16px; }
.car { width: 8px; height: 8px; fill: #222; }

/* Title bar */
.titlebar {
  flex: none; height: 23px; padding-left: 3px;
  display: flex; align-items: center;
  background: linear-gradient(90deg, #faf2e0, #f6f2e2 50%, #f4f3e6 58%, #fbf1e0 70%, #fbf0e0 84%, #f6f1e2);
}
.logo { width: 14px; height: 16px; }
.apptitle { flex: 1; margin-left: 7px; color: #111; font: 12px/16px "Roboto", sans-serif; }
.wincontrols { display: flex; }
.wincontrols button { width: 45px; padding-bottom: 2px; }
.wincontrols svg { width: 12px; height: 12px; }
.wincontrols button:last-child { width: 47px; margin-right: 2px; }

/* Document tab bar */
.tabbar { flex: none; height: 32px; display: flex; align-items: flex-end; background: #cbcbcb; }
.quick { width: 193px; height: 32px; padding-left: 8px; display: flex; align-items: center; }
.quick .car { fill: #666; }
.quick .redo .car { fill: #999; }
.quick .drop { gap: 4px; margin-left: 10px; }
.quick .file { margin-left: 17px; }
.quick .save { margin-left: 18px; }
.quick .save + .drop { margin-left: 16px; }
.quick .redo { margin-left: 11px; }
.doctab {
  flex: 1; height: 28px; padding-right: 6px;
  display: flex; align-items: center;
  background: #f2f2f2; border-radius: 5px 5px 0 0;
}
.docname { flex: 1; display: flex; justify-content: center; gap: 5px; padding: 2px 0 0 6px; font-size: 12px; }
.newtab { width: 28px; height: 28px; margin-left: 4px; background: #b9b9b9; border-radius: 4px 4px 0 0; }
.status { width: 203px; height: 32px; display: flex; align-items: center; padding-left: 12px; }
.jobs { margin-left: 17px; gap: 3px; color: #536; }
.bell { margin-left: 24px; }
.bell + button { margin-left: 17px; }
.avatar { margin-left: 21px; }

/* Ribbon */
.ribbon { flex: none; height: 82px; display: flex; border-bottom: 1px solid #dcdcdc; font-size: 10px; }
.design {
  width: 111px; height: 62px; margin: 10px 5px 0 11px; gap: 6px;
  border: 2px solid #e0e0e0; border-radius: 5px; font-weight: bold;
}
.rmain { flex: 1; display: flex; flex-direction: column; }
.rtabs { display: flex; gap: 19px; padding-left: 11px; }
.rtabs a { height: 24px; padding: 4px 13px 0; line-height: 16px; }
.rtabs .active { background: #cdeaf6; color: #0696d7; font-weight: bold; border-bottom: 3px solid #0696d7; }
.groups { display: flex; height: 59px; margin-top: -2px; }
.group {
  position: relative; padding: 5px 12px 0 10px;
  display: flex; flex-direction: column; align-items: center; gap: 5px;
  margin-bottom: 4px;
}
.group::after { content: ""; position: absolute; right: 0; top: 4px; bottom: 0; width: 2px; background: #dfdfdf; }
.icons { display: flex; align-items: center; gap: 11px; height: 32px; }
.icons svg { width: 32px; height: 32px; }
.icons .big { width: 38px; height: 38px; }
.glabel { gap: 2px; white-space: nowrap; line-height: 16px; }
.small { width: 78px; padding-left: 0; padding-right: 2px; }
.insert { width: 69px; }
.last { width: 76px; }
.last::after, .finish::after { display: none; }
.finish { width: 103px; margin-bottom: 0; background: #cdeaf6; padding-right: 0; }

/* Canvas and floating panels */
.workspace { position: relative; flex: 1; min-height: 0; display: flex; justify-content: space-between; background: #fff; overflow: hidden; }
.viewport { position: absolute; inset: 0; width: 100%; height: 100%; }
.origin { overflow: visible; }
.dims { font-size: 15px; fill: #444; }
.dims .ref { fill: #777; }
.left { position: relative; width: 300px; margin: 7px 0 3px 4px; display: flex; flex-direction: column; }
.panelbar {
  flex: none; height: 25px; padding: 0 10px 0 4px;
  display: flex; align-items: center;
  background: #f2f2f2; border: 1px solid #c8c8c8; font-size: 10px; color: #555;
}
.panelbar span { flex: 1; margin-left: 8px; }
.comments { margin-top: auto; border-top: 0; }
.comments span { margin-left: 20px; }
.tree { margin-top: 3px; }
.tree li { height: 24px; display: flex; align-items: center; }
.tw { width: 12px; height: 13px; margin-right: 7px; }
.l0 { padding-left: 16px; }
.l1 { padding-left: 35px; }
.l2 { padding-left: 72px; }
.node { height: 20px; padding: 0 10px 0 3px; display: flex; align-items: center; gap: 9px; background: #f2f2f2; }
.node span { margin-left: 4px; }
.root { padding: 0 6px 0 4px; gap: 3px; border-left: 3px solid #e38fe3; margin-left: 2px; }
.node .sel { margin-left: 3px; height: 16px; display: flex; gap: 14px; padding: 0 10px 0 3px; background: #919191; color: #fff; }

.navbar {
  position: relative; align-self: flex-end; height: 24px; margin: 0 auto 6px 538px; padding: 0 3px;
  display: flex; align-items: center; gap: 10px; background: #f2f2f2;
}
.navbar .drop { gap: 4px; margin-right: -5px; }
.navbar .tight { gap: 1px; margin-right: -4px; }
.navbar .tight:last-child { margin-right: 0; }

.right { position: relative; width: 250px; margin: 18px 4px 0 0; display: flex; flex-direction: column; }
.viewcube { align-self: flex-end; margin-right: 16px; }
.front { font: bold 13px "Roboto", sans-serif; fill: #8c8f94; }
.axis { font: 14px "Roboto", sans-serif; }
.palette { margin: 19px 0 0; background: #f2f2f2; border: 1px solid #c8c8c8; }
.phead { height: 24px; padding: 0 3px 0 11px; display: flex; align-items: center; gap: 3px; border-bottom: 1px solid #c8c8c8; font-size: 10px; color: #555; }
.phead span { flex: 1; }
.pbody { padding: 0 0 1px 12px; }
.pbody h2 { margin: 0 0 0 -3px; height: 30px; display: flex; align-items: center; gap: 5px; font-size: 11px; }
.prow { height: 30px; display: grid; grid-template-columns: 152px 1fr; align-items: center; }
.lt { display: flex; gap: 13px; }
.prow input {
  appearance: none; width: 14px; height: 14px; margin: 0 1px;
  border: 1px solid #444; border-radius: 3px;
  background: linear-gradient(#fff, #b5b5b5);
}
.prow input:checked { background: linear-gradient(#bbb, #e4e4e4); }
.prow input:checked::before {
  content: ""; display: block; width: 12px; height: 12px; background: #111;
  clip-path: polygon(12% 52%, 26% 46%, 38% 68%, 78% 8%, 92% 10%, 44% 90%, 32% 90%);
}
.pfoot { height: 36px; padding: 8px 11px; border-top: 1px solid #c8c8c8; display: flex; justify-content: flex-end; }
.pfoot button { height: 20px; width: 82px; border: 1px solid #b5b5b5; background: #ebebeb; color: #666; font-size: 12px; }

/* Timeline */
.timeline { flex: none; height: 53px; display: flex; border-top: 1px solid #dcdcdc; background: #f2f2f2; }
.play { display: flex; gap: 11px; padding: 17px 0 0 10px; align-items: flex-start; }
.play svg { width: 14px; height: 14px; fill: #444; }
.trackwrap { position: relative; margin: 7px 0 0 18px; }
.bar { height: 6px; margin-left: 2px; background: #e590e5; }
.track { display: flex; }
.track li { width: 24px; height: 28px; padding: 2px 4px 0; border-bottom: 2px solid #ccc; position: relative; }
.track li::after { content: ""; position: absolute; left: 11px; bottom: 0; width: 2px; height: 5px; background: #ccc; }
.track li:first-child { border-image: linear-gradient(90deg, transparent 50%, #ccc 50%) 2; border-width: 0 0 2px; }
.track li:last-child { border-image: linear-gradient(90deg, #ccc 50%, transparent 50%) 2; border-width: 0 0 2px; }
.marker { position: absolute; right: -6px; top: 2px; }
.settings { margin: 0 13px 0 auto; padding-bottom: 3px; }
```
